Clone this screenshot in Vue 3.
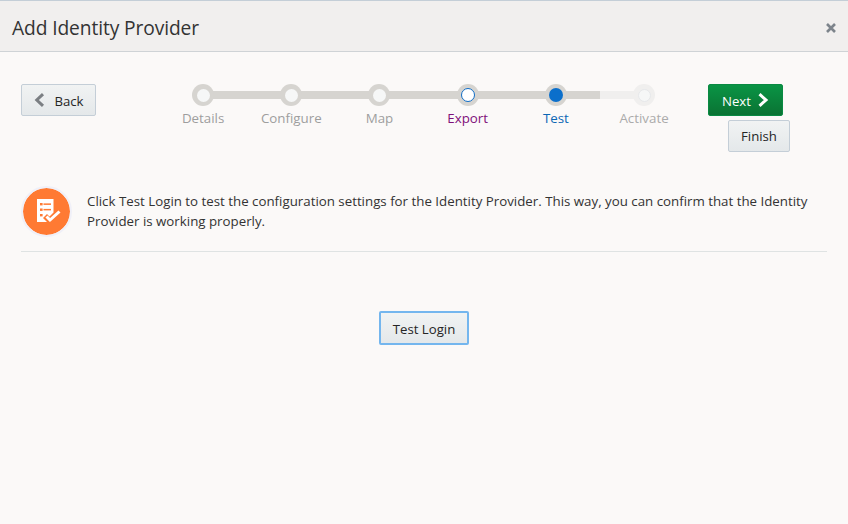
<script setup>
const steps = [
  { label: 'Details', state: 'done' },
  { label: 'Configure', state: 'done' },
  { label: 'Map', state: 'done' },
  { label: 'Export', state: 'visited' },
  { label: 'Test', state: 'current' },
  { label: 'Activate', state: 'disabled' },
]
</script>

<template>
  <div class="dialog">
    <header class="head">
      <h1 class="title">Add Identity Provider</h1>
      <svg class="close" width="10" height="10" viewBox="0 0 10 10" aria-label="Close">
        <path d="M1 1 L9 9 M9 1 L1 9" stroke="#7d848b" stroke-width="2.6" fill="none" />
      </svg>
    </header>

    <main class="body">
      <div class="top">
        <button class="btn back">
          <svg width="11" height="14" viewBox="0 0 11 14"><path d="M9 1.2 L2.8 7 L9 12.8" stroke="#7b7f83" stroke-width="3" fill="none" /></svg>
          <span class="cap">Back</span>
        </button>

        <div class="train">
          <div class="track"><i class="track-on"></i><i class="track-off"></i></div>
          <div v-for="s in steps" :key="s.label" class="step" :class="s.state">
            <span class="dot"><span class="inner"></span></span>
            <span class="label">{{ s.label }}</span>
          </div>
        </div>

        <div class="actions">
          <button class="btn next">
            <span class="cap">Next</span>
            <svg width="12" height="14" viewBox="0 0 12 14"><path d="M2.5 1.2 L9 7 L2.5 12.8" stroke="#fff" stroke-width="3" fill="none" /></svg>
          </button>
          <button class="btn finish">Finish</button>
        </div>
      </div>

      <div class="message">
        <span class="badge">
          <svg width="47" height="47" viewBox="0 0 47 47">
            <path d="M14 11 H30.5 V24.5 L26.5 28.5 L24 26 L20 30 L24 34 H14 Z" fill="#fff" />
            <g fill="#ff7a33">
              <rect x="17" y="15" width="2.6" height="2.4" />
              <rect x="20.5" y="15.4" width="7.5" height="1.5" />
              <rect x="17" y="20.5" width="2.6" height="2.4" />
              <rect x="20.5" y="20.9" width="7.5" height="1.5" />
              <rect x="17" y="26" width="2.6" height="2.4" />
            </g>
            <path d="M23.5 28.5 L27 32 L36.5 23.5" stroke="#fff" stroke-width="3" fill="none" />
          </svg>
        </span>
        <p class="text">Click Test Login to test the configuration settings for the Identity Provider. This way, you can confirm that the Identity Provider is working properly.</p>
      </div>

      <div class="center">
        <button class="btn test"><span class="cap">Test Login</span></button>
      </div>
    </main>
  </div>
</template>

<style>
html, body { margin: 0; background: #fbf9f8; }
</style>

<style scoped>
.dialog {
  width: 848px;
  height: 524px;
  box-sizing: border-box;
  background: #fbf9f8;
  font-family: "Open Sans", "Noto Sans", sans-serif;
  color: #252525;
  overflow: hidden;
}
.head {
  height: 52px;
  box-sizing: border-box;
  border-top: 1px solid #c4ced7;
  border-bottom: 1px solid #cfd3d6;
  background: #f1efee;
  display: flex;
  align-items: center;
  justify-content: space-between;
  padding: 3px 12px 0 12px;
}
.title {
  margin: 0;
  font-size: 19.2px;
  font-weight: 400;
  color: #333;
  letter-spacing: -0.1px;
}
.close { margin-top: 1px; }
.body { padding: 32px 21px 0; }
.top { display: flex; align-items: flex-start; }
.btn {
  box-sizing: border-box;
  height: 32px;
  border: 1px solid #c4ced7;
  border-radius: 2px;
  background: linear-gradient(#f1f3f3, #e4e8ea);
  font: inherit;
  font-size: 13.2px;
  color: #252525;
  padding: 0;
  display: flex;
  align-items: center;
  justify-content: center;
}
.cap { padding-top: 2px; }
.back { width: 75px; gap: 9px; padding-left: 1px; }
.train {
  position: relative;
  display: flex;
  margin-left: 63px;
  width: 529.2px;
}
.track {
  position: absolute;
  left: 44px;
  top: 7px;
  width: 441px;
  height: 8px;
  display: flex;
}
.track-on { width: 397px; background: #d6d4d0; }
.track-off { flex: 1; background: #f0efee; }
.step {
  position: relative;
  width: 88.2px;
  display: flex;
  flex-direction: column;
  align-items: center;
  gap: 3px;
}
.dot {
  width: 22px;
  height: 22px;
  border-radius: 50%;
  background: #d6d4d0;
  display: flex;
  align-items: center;
  justify-content: center;
}
.inner {
  width: 13px;
  height: 13px;
  box-sizing: border-box;
  border-radius: 50%;
  background: #f6f7f7;
}
.label { font-size: 13.33px; line-height: 18px; color: #9e9e9e; }
.visited .inner { width: 14px; height: 14px; background: #fff; border: 1px solid #0f6cc6; }
.visited .label { color: #80107a; }
.current .inner { width: 14px; height: 14px; background: #0b6fcb; }
.current .label { color: #0b67b5; }
.disabled .dot { background: #f0efee; }
.disabled .inner { background: #f6f7f7; border: 1px solid #e6e8ea; }
.disabled .label { color: #ababab; }
.actions {
  margin-left: 19.8px;
  width: 82px;
  display: flex;
  flex-direction: column;
  gap: 4px;
}
.next {
  width: 75px;
  gap: 6px;
  border-color: #0a8a43;
  background: linear-gradient(#0a9445, #0a7333);
  color: #fff;
}
.finish { width: 62px; align-self: flex-end; }
.message {
  margin-top: 34px;
  padding-bottom: 16px;
  height: 49px;
  display: flex;
  align-items: flex-start;
  border-bottom: 1px solid #dfe3e3;
}
.badge {
  width: 47px;
  height: 47px;
  border: 2px solid #f0f0f8;
  border-radius: 50%;
  background: #ff7a33;
  background-clip: padding-box;
  display: flex;
  align-items: center;
  justify-content: center;
  flex: none;
}
.text {
  margin: 5px 0 0 15px;
  font-size: 13.3px;
  line-height: 20px;
  color: #333;
  width: 735px;
}
.center { display: flex; justify-content: center; margin-top: 59px; }
.test {
  width: 90px;
  height: 34px;
  border: 2px solid #74b6ee;
}
</style>
